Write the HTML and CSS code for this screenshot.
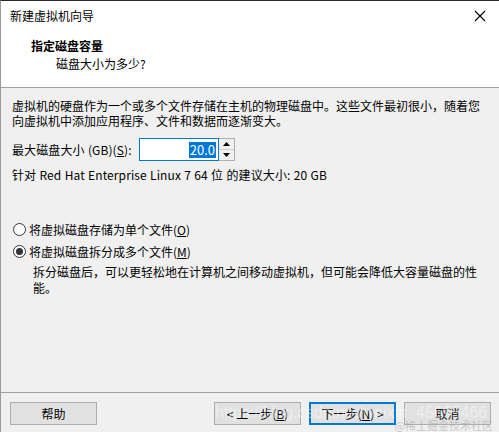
FILE: index.html
```html
<!DOCTYPE html>
<html lang="zh-CN">
<head>
<meta charset="utf-8">
<link rel="stylesheet" href="styles.css">
</head>
<body>
<div class="win">
  <div class="titlebar">
    <span class="title">新建虚拟机向导</span>
    <svg class="close" width="12" height="12" viewBox="0 0 12 12"><path d="M1 1L11 11M11 1L1 11" stroke="#000" stroke-width="1.1" fill="none"/></svg>
  </div>
  <div class="header">
    <div class="h-title">指定磁盘容量</div>
    <div class="h-sub">磁盘大小为多少?</div>
  </div>
  <div class="body">
    <p class="para">虚拟机的硬盘作为一个或多个文件存储在主机的物理磁盘中。这些文件最初很小，随着您<br>向虚拟机中添加应用程序、文件和数据而逐渐变大。</p>
    <div class="size-row">
      <span class="lbl lat">最大磁盘大小 (GB)(<u>S</u>):</span>
      <div class="spin">
        <div class="spin-input"><span class="sel">20.0</span></div>
        <div class="spin-btns">
          <div class="sb"><svg width="7" height="4" viewBox="0 0 7 4"><path d="M0 4L3.5 0L7 4Z" fill="#000"/></svg></div>
          <div class="sb"><svg width="7" height="4" viewBox="0 0 7 4"><path d="M0 0L3.5 4L7 0Z" fill="#000"/></svg></div>
        </div>
      </div>
    </div>
    <p class="rec lat">针对 Red Hat Enterprise Linux 7 64 位 的建议大小: 20 GB</p>
    <div class="radios">
      <label class="radio"><span class="dot"></span>将虚拟磁盘存储为单个文件(<u>O</u>)</label>
      <label class="radio"><span class="dot on"></span>将虚拟磁盘拆分成多个文件(<u>M</u>)</label>
      <p class="desc">拆分磁盘后，可以更轻松地在计算机之间移动虚拟机，但可能会降低大容量磁盘的性<br>能。</p>
    </div>
  </div>
  <div class="footer">
    <button class="btn">帮助</button>
    <div class="spacer"></div>
    <button class="btn">&lt; 上一步(<u>B</u>)</button>
    <button class="btn def">下一步(<u>N</u>) &gt;</button>
    <button class="btn">取消</button>
  </div>
  <div class="wm1">https://blog.csdn.net/weixin_45695466</div>
  <div class="wm2">@稀土掘金技术社区</div>
</div>
</body>
</html>
```
FILE: styles.css
```css
* { box-sizing: border-box; }
html, body { margin: 0; padding: 0; }
body {
  width: 499px; height: 432px; overflow: hidden;
  font-family: "Noto Sans CJK SC", "Noto Sans", sans-serif;
  font-size: 12px; color: #000;
  background: #f0f0f0;
}
.win {
  position: relative;
  width: 499px; height: 432px;
  border-top: 1px solid #2b2b2b;
  border-left: 1px solid #9a9a9a;
  display: flex; flex-direction: column;
  background: #f0f0f0;
}
.titlebar {
  height: 29px; background: #fff;
  display: flex; align-items: center;
  padding: 1px 9px 0 9px;
}
.title { flex: 1; font-size: 12px; line-height: 16px; }
.close { margin-right: 4px; }
.header {
  height: 58px; background: #fff;
  border-bottom: 1px solid #a0a0a0;
  padding: 8px 0 0 30px;
}
.h-title { font-weight: bold; line-height: 16px; }
.h-sub { padding-left: 25px; margin-top: 2px; line-height: 16px; }
.body { flex: 1; padding: 10px 0 0 11px; }
.para { margin: 0; line-height: 15px; }
.lat { letter-spacing: 0.1px; word-spacing: 0.5px; }
.size-row { display: flex; align-items: center; margin-top: 10px; height: 23px; }
.lbl { width: 127px; }
.spin { display: flex; height: 23px; }
.spin-input {
  width: 80px; height: 23px;
  border: 1px solid #0078d7; background: #fff;
  display: flex; align-items: center; justify-content: flex-end;
  padding-right: 2px;
}
.sel { background: #0078d7; color: #fff; font-size: 13px; line-height: 16px; padding: 0 1px; }
.spin-btns {
  width: 16px; display: flex; flex-direction: column;
  border: 1px solid #adadad; border-left: none; background: #f0f0f0;
}
.sb { flex: 1; display: flex; align-items: center; justify-content: center; }
.sb + .sb { border-top: 1px solid #d0d0d0; }
.rec { margin: 6px 0 0 0; line-height: 16px; }
.radios { margin-top: 38px; }
.radio { display: flex; align-items: center; height: 16px; margin-bottom: 6px; }
.dot {
  width: 13px; height: 13px; border-radius: 50%;
  border: 1px solid #333; background: #fff; margin: 0 3px 0 1px;
  display: flex; align-items: center; justify-content: center;
}
.dot.on::after {
  content: ""; width: 7px; height: 7px; border-radius: 50%; background: #333;
}
.desc { margin: -1px 0 0 21px; line-height: 16px; }
.footer {
  height: 40px; border-top: 1px solid #a0a0a0;
  display: flex; align-items: flex-start;
  padding: 9px 0 0 9px;
}
.spacer { flex: 1; }
.btn {
  width: 87px; height: 23px;
  font-family: inherit; font-size: 12px; color: #000;
  background: #e1e1e1; border: 1px solid #adadad;
  padding: 0; margin: 0 8px 0 0;
  line-height: 16px;
}
.btn.def { border: 2px solid #0078d7; }
.wm1 {
  position: absolute; left: 214px; top: 403px;
  font-family: "Liberation Sans", sans-serif; font-size: 16px;
  color: rgba(255,255,255,0.45); white-space: nowrap;
  pointer-events: none;
}
.wm2 {
  position: absolute; right: 6px; top: 416px;
  font-size: 11px; color: rgba(170,170,170,0.6); white-space: nowrap;
  pointer-events: none;
}
```
